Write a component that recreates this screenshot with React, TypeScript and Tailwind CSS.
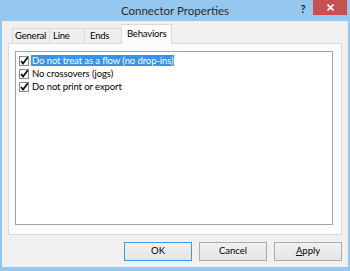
import React from 'react';

const font = { fontFamily: 'Lato, "Liberation Sans", sans-serif' };

function CheckBox() {
  return (
    <svg width="10" height="10" viewBox="0 0 10 10" className="shrink-0">
      <rect x="0.5" y="0.5" width="9" height="9" fill="#fff" stroke="#8a8a8a" />
      <path d="M2 5 L4 7.5 L8.8 1.2" fill="none" stroke="#111" strokeWidth="1.8" />
    </svg>
  );
}

const tabs = [
  { label: 'General', cls: 'w-[38px] pl-[2px]' },
  { label: 'Line', cls: 'w-[36px] pl-[3px] -ml-px' },
  { label: 'Ends', cls: 'w-[38px] pl-[5px] -ml-px' },
];
const items = ['Do not treat as a flow (no drop-ins)', 'No crossovers (jogs)', 'Do not print or export'];

export default function App() {
  return (
    <div className="w-[350px] h-[271px] bg-[#96c8ef] flex flex-col" style={font}>
      <div className="h-[21px] flex items-start shrink-0">
        <div className="flex-1 text-center text-[11.5px] leading-[21px] text-[#2b2b2b] pl-[57px]">Connector Properties</div>
        <div className="w-[20px] text-center text-[11px] font-bold leading-[18px] text-[#222]">?</div>
        <div className="w-[34px] h-[15px] bg-[#c75050] flex items-center justify-center mr-[3px]">
          <svg width="7" height="7" viewBox="0 0 7 7">
            <path d="M0.5 0.5 L6.5 6.5 M6.5 0.5 L0.5 6.5" stroke="#fff" strokeWidth="1.6" />
          </svg>
        </div>
      </div>
      <div className="flex-1 mx-[2px] mb-[4px] bg-[#f0f0f0] flex flex-col px-[6px] pt-[3px]">
        <div className="flex items-end pl-[4px] h-[19px] relative z-10 text-[9.5px] tracking-[-0.2px] text-black">
          {tabs.map((t) => (
            <div
              key={t.label}
              className={'h-[15px] bg-[#efefef] border border-b-0 border-[#d9d9d9] leading-[14px] ' + t.cls}
            >
              {t.label}
            </div>
          ))}
          <div className="w-[51px] -ml-px h-[20px] -mb-[1px] bg-[#fcfcfc] border border-b-0 border-[#d9d9d9] pl-[5px] leading-[17px]">
            Behaviors
          </div>
        </div>
        <div className="h-[192px] bg-[#fcfcfc] border border-[#d9d9d9] pl-[6px] pr-[8px] pt-[7px] pb-[9px] flex">
          <div className="flex-1 bg-white border border-[#a3a3a3] pt-[2px] pl-[3px]">
            {items.map((it, i) => (
              <div key={it} className="h-[13px] flex items-center gap-[2px]">
                <CheckBox />
                <span
                  className={
                    'text-[9.5px] tracking-[-0.1px] leading-[11px] px-[1px] ' +
                    (i === 0 ? 'bg-[#3a93e6] text-white' : 'text-black')
                  }
                >
                  {it}
                </span>
              </div>
            ))}
          </div>
        </div>
        <div className="flex justify-end gap-[7px] mt-[7px]">
          {['OK', 'Cancel', 'Apply'].map((b) => (
            <div
              key={b}
              className={
                'w-[68px] h-[19px] flex items-center justify-center text-[9.5px] text-black bg-gradient-to-b from-[#f0f0f0] to-[#e5e5e5] border ' +
                (b === 'OK' ? 'border-[#3c9ae8]' : 'border-[#acacac]')
              }
            >
              {b === 'Apply' ? (
                <span>
                  <span className="underline">A</span>pply
                </span>
              ) : (
                b
              )}
            </div>
          ))}
        </div>
      </div>
    </div>
  );
}
